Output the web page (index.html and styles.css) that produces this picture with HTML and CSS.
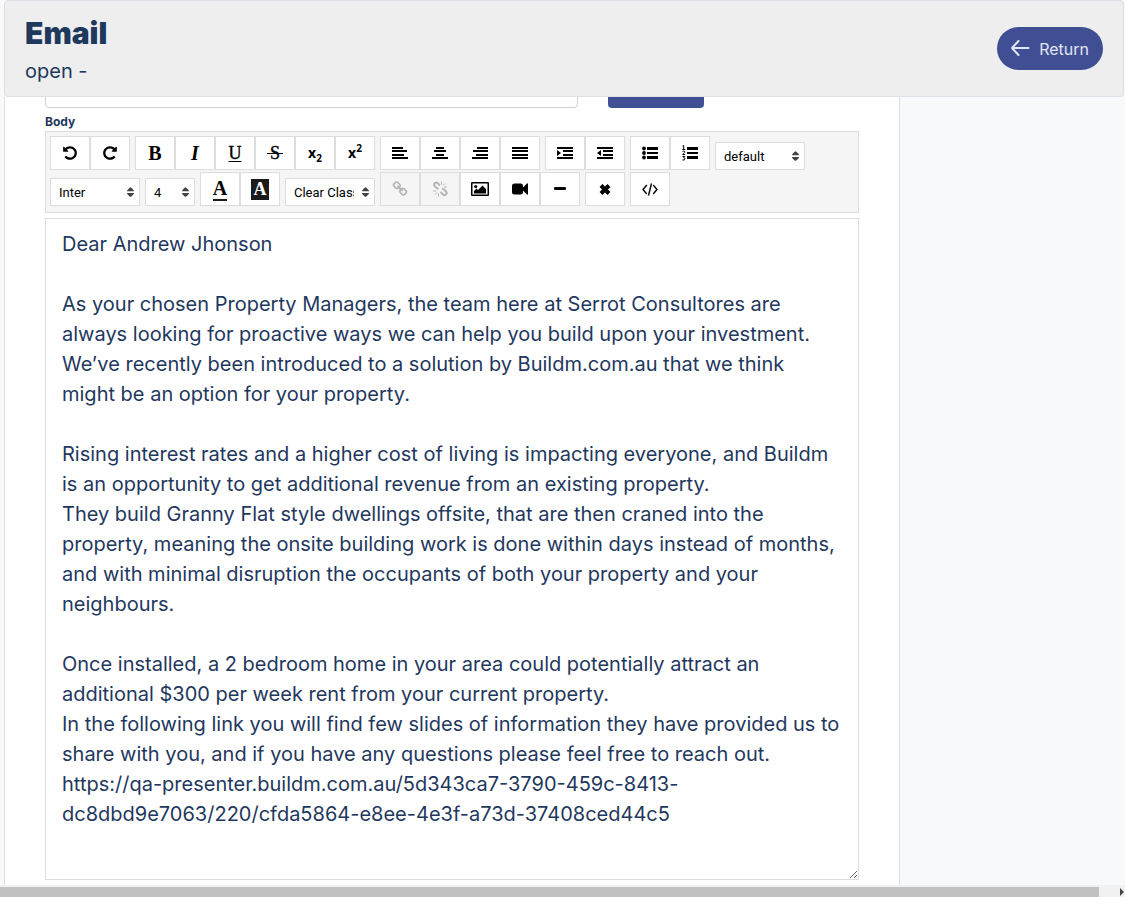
FILE: index.html
```html
<!DOCTYPE html>
<html lang="en">
<head>
<meta charset="utf-8">
<meta name="viewport" content="width=device-width, initial-scale=1">
<title>Email</title>
<link rel="stylesheet" href="styles.css">
</head>
<body>
<div class="page">
  <header class="header">
    <div class="heading">
      <h1 class="title">Email</h1>
      <p class="subtitle">open -</p>
    </div>
    <button class="return" type="button">
      <svg class="return-icon" viewBox="0 0 20 20" aria-hidden="true"><path d="M18.500 9H2M8.500 2L2 9l6.500 7"/></svg>
      Return
    </button>
  </header>

  <main class="main">
    <form class="card">
      <div class="subject-row">
        <input class="subject" type="text" aria-label="Subject">
        <button class="apply" type="button" aria-label="Apply"></button>
      </div>
      <label class="label" for="body">Body</label>

      <div class="toolbar" role="toolbar" aria-label="Formatting">
        <div class="group">
          <button class="tool" type="button" aria-label="Undo"><svg class="icon" viewBox="0 0 1792 1792"><path d="M1664 896q0 156-61 298t-164 245-245 164-298 61q-172 0-327-72.500t-264-204.500q-7-10-6.500-22.500t8.500-20.500l137-138q10-9 25-9 16 2 23 12 73 95 179 147t225 52q104 0 198.500-40.500t163.500-109.500 109.500-163.500 40.500-198.500-40.500-198.500-109.500-163.500-163.500-109.500-198.500-40.500q-98 0-188 35.500t-160 101.500l137 138q31 30 14 69-17 40-59 40h-448q-26 0-45-19t-19-45v-448q0-42 40-59 39-17 69 14l130 129q107-101 244.500-156.500t284.500-55.500q156 0 298 61t245 164 164 245 61 298z"/></svg></button>
          <button class="tool" type="button" aria-label="Redo"><svg class="icon icon-mirror" viewBox="0 0 1792 1792"><path d="M1664 896q0 156-61 298t-164 245-245 164-298 61q-172 0-327-72.500t-264-204.500q-7-10-6.500-22.500t8.500-20.500l137-138q10-9 25-9 16 2 23 12 73 95 179 147t225 52q104 0 198.500-40.500t163.500-109.500 109.500-163.500 40.500-198.500-40.500-198.500-109.500-163.500-163.500-109.500-198.500-40.500q-98 0-188 35.500t-160 101.500l137 138q31 30 14 69-17 40-59 40h-448q-26 0-45-19t-19-45v-448q0-42 40-59 39-17 69 14l130 129q107-101 244.500-156.500t284.500-55.500q156 0 298 61t245 164 164 245 61 298z"/></svg></button>
        </div>
        <div class="group">
          <button class="tool serif" type="button" aria-label="Bold">B</button>
          <button class="tool serif" type="button" aria-label="Italic"><i>I</i></button>
          <button class="tool serif regular" type="button" aria-label="Underline"><u>U</u></button>
          <button class="tool serif regular" type="button" aria-label="Strikethrough"><span class="strike">S</span></button>
          <button class="tool script" type="button" aria-label="Subscript"><span>x<sub>2</sub></span></button>
          <button class="tool script" type="button" aria-label="Superscript"><span>x<sup>2</sup></span></button>
        </div>
        <div class="group">
          <button class="tool" type="button" aria-label="Align left"><svg class="icon" viewBox="0 0 16 16"><path d="M0 2h11v2H0zM0 5h15v2H0zM0 9h12v2H0zM0 12h16v2H0z"/></svg></button>
          <button class="tool" type="button" aria-label="Align center"><svg class="icon" viewBox="0 0 16 16"><path d="M4 2h8v2H4zM2 5h12v2H2zM4 9h8v2H4zM0 12h16v2H0z"/></svg></button>
          <button class="tool" type="button" aria-label="Align right"><svg class="icon" viewBox="0 0 16 16"><path d="M5 2h11v2H5zM1 5h15v2H1zM4 9h12v2H4zM0 12h16v2H0z"/></svg></button>
          <button class="tool" type="button" aria-label="Justify"><svg class="icon" viewBox="0 0 16 16"><path d="M0 2h16v2H0zM0 5h16v2H0zM0 9h16v2H0zM0 12h16v2H0z"/></svg></button>
        </div>
        <div class="group">
          <button class="tool" type="button" aria-label="Indent"><svg class="icon" viewBox="0 0 16 16"><path d="M0 2h16v2H0zM6 5h10v2H6zM6 9h10v2H6zM0 12h16v2H0zM0 5l4 3-4 3z"/></svg></button>
          <button class="tool" type="button" aria-label="Outdent"><svg class="icon" viewBox="0 0 16 16"><path d="M0 2h16v2H0zM6 5h10v2H6zM6 9h10v2H6zM0 12h16v2H0zM4 5l-4 3 4 3z"/></svg></button>
        </div>
        <div class="group">
          <button class="tool" type="button" aria-label="Bulleted list"><svg class="icon" viewBox="0 0 16 16"><path d="M5 2h11v3H5zM5 7h11v2H5zM5 11h11v3H5z"/><circle cx="2" cy="3.500" r="1.900"/><circle cx="2" cy="8" r="1.900"/><circle cx="2" cy="12.500" r="1.900"/></svg></button>
          <button class="tool" type="button" aria-label="Numbered list"><svg class="icon" viewBox="0 0 16 16"><path d="M5 2h11v3H5zM5 7h11v2H5zM5 11h11v3H5z"/><path class="line" d="M.500 1L1.700.500v4M.300 4.500h2.900M.500 6.500q1-.700 2-.200 1 1-.600 2L.600 9.500h2.600M.500 11.500h2.300l-1.200 1.300q1.600 0 1.400 1.400-.600 1.400-2.600.700"/></svg></button>
        </div>
        <span class="picker picker-wide">
          <select class="select" aria-label="Block style"><option>default</option></select>
          <svg class="sorter" viewBox="0 0 8 12"><path d="M0 5q0-1 1-2l2-2q1-1 2 0l2 2q1 1 1 2zM0 7h8q0 1-1 2l-2 2q-1 1-2 0L1 9Q0 8 0 7z"/></svg>
        </span>
        <span class="picker picker-wide">
          <select class="select" aria-label="Font"><option>Inter</option></select>
          <svg class="sorter" viewBox="0 0 8 12"><path d="M0 5q0-1 1-2l2-2q1-1 2 0l2 2q1 1 1 2zM0 7h8q0 1-1 2l-2 2q-1 1-2 0L1 9Q0 8 0 7z"/></svg>
        </span>
        <span class="picker picker-narrow">
          <select class="select" aria-label="Font size"><option>4</option></select>
          <svg class="sorter" viewBox="0 0 8 12"><path d="M0 5q0-1 1-2l2-2q1-1 2 0l2 2q1 1 1 2zM0 7h8q0 1-1 2l-2 2q-1 1-2 0L1 9Q0 8 0 7z"/></svg>
        </span>
        <div class="group">
          <button class="tool serif" type="button" aria-label="Text color"><span class="ink">A</span></button>
          <button class="tool serif" type="button" aria-label="Background color"><span class="fill">A</span></button>
        </div>
        <span class="picker picker-wide">
          <select class="select" aria-label="Class"><option>Clear Class</option></select>
          <svg class="sorter" viewBox="0 0 8 12"><path d="M0 5q0-1 1-2l2-2q1-1 2 0l2 2q1 1 1 2zM0 7h8q0 1-1 2l-2 2q-1 1-2 0L1 9Q0 8 0 7z"/></svg>
        </span>
        <div class="group">
          <button class="tool" type="button" aria-label="Insert link" disabled><svg class="icon" viewBox="0 0 1792 1792"><path d="M1520 1216q0-40-28-68l-208-208q-28-28-68-28-42 0-72 32 3 3 19 18.500t21.500 21.500 15 19 13 25.500 3.500 27.500q0 40-28 68t-68 28q-15 0-27.500-3.500t-25.500-13-19-15-21.500-21.500-18.500-19q-33 31-33 73 0 40 28 68l206 207q27 27 68 27 40 0 68-26l147-146q28-28 28-67zm-703-705q0-40-28-68l-206-207q-28-28-68-28-39 0-68 27l-147 146q-28 28-28 67 0 40 28 68l208 208q27 27 68 27 42 0 72-31-3-3-19-18.500t-21.500-21.500-15-19-13-25.500-3.500-27.500q0-40 28-68t68-28q15 0 27.500 3.500t25.500 13 19 15 21.500 21.500 18.500 19q33-31 33-73zm895 705q0 120-85 203l-147 146q-83 83-203 83-121 0-204-85l-206-207q-83-83-83-203 0-123 88-209l-88-88q-86 88-208 88-120 0-204-84l-208-208q-84-84-84-204t85-203l147-146q83-83 203-83 121 0 204 85l206 207q83 83 83 203 0 123-88 209l88 88q86-88 208-88 120 0 204 84l208 208q84 84 84 204z"/></svg></button>
          <button class="tool" type="button" aria-label="Unlink" disabled><svg class="icon" viewBox="0 0 16 16"><path class="chain" d="M6.500 7.500q-1 .300-1.800-.500L2.400 4.700Q1.500 3.600 2.500 2.500L3.300 1.800Q4.500 1 5.500 2L8 4.500M8.500 11l2.800 2.800q1.100.900 2.200 0l.700-.800q1-1.100 0-2.200L12 8.500q-.900-.800-2-.300"/><path class="line" d="M9.500.500v3M11 4.500L13 2.500M12 6h3M1 10h3M3 13.500l2-2M6.500 12.500v3"/></svg></button>
          <button class="tool" type="button" aria-label="Insert image"><svg class="icon icon-wide" viewBox="0 0 18 16"><path fill-rule="evenodd" d="M1 1h16q1 0 1 1v12q0 1-1 1H1q-1 0-1-1V2q0-1 1-1zM1.500 2.500v11h15v-11z"/><circle cx="4.700" cy="5.500" r="1.600"/><path d="M3 12.500V10L5.500 7.500 7 9l4.500-4.500L15 8v4.500z"/></svg></button>
          <button class="tool" type="button" aria-label="Insert video"><svg class="icon" viewBox="0 0 16 16"><path d="M2.500 2.500h6q2.500 0 2.500 2.500v1.500l4-4q1-.500 1 .500v10q0 1-1 .500l-4-4V11q0 2.500-2.500 2.500h-6Q0 13.500 0 11V5q0-2.500 2.500-2.500z"/></svg></button>
          <button class="tool" type="button" aria-label="Horizontal line"><svg class="icon" viewBox="0 0 16 16"><rect x="2" y="6" width="12" height="3" rx="1"/></svg></button>
        </div>
        <div class="group">
          <button class="tool" type="button" aria-label="Clear formatting"><svg class="icon" viewBox="0 0 16 16"><path class="cross" d="M4 4.500l8 8M12 4.500l-8 8"/></svg></button>
        </div>
        <div class="group">
          <button class="tool" type="button" aria-label="HTML code"><svg class="icon" viewBox="0 0 16 16"><path class="code" d="M4.800 4L1 8.500l3.800 4.500M11.200 4L15 8.500l-3.800 4.500M9.500 2.500l-3 12"/></svg></button>
        </div>
      </div>

      <textarea class="editor" id="body" spellcheck="false">Dear Andrew Jhonson

As your chosen Property Managers, the team here at Serrot Consultores are always looking for proactive ways we can help you build upon your investment.
We’ve recently been introduced to a solution by Buildm.com.au that we think might be an option for your property.

Rising interest rates and a higher cost of living is impacting everyone, and Buildm is an opportunity to get additional revenue from an existing property.
They build Granny Flat style dwellings offsite, that are then craned into the property, meaning the onsite building work is done within days instead of months, and with minimal disruption the occupants of both your property and your neighbours.

Once installed, a 2 bedroom home in your area could potentially attract an additional $300 per week rent from your current property.
In the following link you will find few slides of information they have provided us to share with you, and if you have any questions please feel free to reach out.
https://qa-presenter.buildm.com.au/5d343ca7-3790-459c-8413-dc8dbd9e7063/220/cfda5864-e8ee-4e3f-a73d-37408ced44c5</textarea>
    </form>
  </main>

  <div class="scrollbar" aria-hidden="true">
    <div class="thumb"></div>
    <svg class="scroll-arrow" viewBox="0 0 6 8"><path d="M1 0l4 4-4 4z"/></svg>
  </div>
</div>
</body>
</html>
```

FILE: styles.css
```css
* {
  box-sizing: border-box;
}

body {
  margin: 0;
  background: #f8f9fb;
  color: #1f385e;
  font-family: Inter, "Liberation Sans", sans-serif;
}

.page {
  display: flex;
  flex-direction: column;
  height: 100vh;
  overflow: hidden;
}

.header {
  display: flex;
  flex: none;
  align-items: center;
  justify-content: space-between;
  margin: 0 1px 0 4px;
  padding: 11px 20px;
  border: 1px solid #dddfe6;
  border-radius: 4px;
  background: #eee;
}

.title {
  margin: 0 0 3px;
  font-size: 30px;
  font-weight: 900;
  line-height: 42px;
}

.subtitle {
  margin: 0;
  font-size: 20px;
  line-height: 28px;
}

.return {
  display: flex;
  align-items: center;
  gap: 9px;
  padding: 12px 14px 11px 13px;
  border: 0;
  border-radius: 22px;
  background: #404f94;
  color: #e1e5f5;
  font: 16px/20px Inter, sans-serif;
}

.return-icon {
  width: 20px;
  height: 20px;
  fill: none;
  stroke: currentColor;
  stroke-width: 2;
  stroke-linecap: round;
  stroke-linejoin: round;
}

.main {
  display: flex;
  flex: 1;
  min-height: 0;
  padding-left: 4px;
  overflow: hidden;
}

.card {
  display: flex;
  flex-direction: column;
  width: 79.9%;
  padding: 0 40px 5px;
  border: solid #dddfe6;
  border-width: 0 1px;
  background: #fff;
}

.subject-row {
  display: flex;
  gap: 30px;
  margin-top: -27px;
}

.subject {
  width: 65.5%;
  height: 38px;
  border: 1px solid #cdd1da;
  border-radius: 4px;
}

.apply {
  width: 96px;
  border: 0;
  border-radius: 4px;
  background: #404f94;
}

.label {
  margin: 5px 0 1px;
  font-size: 12px;
  font-weight: 700;
  line-height: 17px;
}

.toolbar {
  display: flex;
  flex-wrap: wrap;
  align-items: flex-end;
  gap: 2px 5px;
  padding: 4px 4px 6px;
  border: 1px solid #ddd;
  background: #f5f5f5;
  color: #000;
}

.group {
  display: flex;
}

.tool {
  display: flex;
  align-items: center;
  justify-content: center;
  width: 40px;
  height: 34px;
  padding: 0;
  border: 1px solid #ddd;
  background: #fff;
  color: #000;
}

.tool:disabled {
  background: #f5f5f5;
  color: #b5b5b5;
}

.icon {
  width: 16px;
  height: 16px;
  fill: currentColor;
}

.icon-wide {
  width: 18px;
}

.icon-mirror {
  transform: scaleX(-1);
}

.line,
.chain,
.cross,
.code {
  fill: none;
  stroke: currentColor;
}

.chain {
  stroke-width: 2;
}

.cross {
  stroke-width: 4;
}

.code {
  stroke-width: 1.4;
}

.serif {
  font: bold 20px/22px "Liberation Serif", serif;
}

.regular {
  font-size: 18px;
  font-weight: 400;
  -webkit-text-stroke: 0.4px #000;
}

.serif u {
  text-decoration-thickness: 1px;
  text-underline-offset: 2px;
}

.strike {
  padding: 0 3px;
  background: linear-gradient(#000, #000) center / 100% 1px no-repeat;
}

.script {
  font: bold 14px/20px "Open Sans", sans-serif;
}

.script sub,
.script sup {
  font-size: 10px;
  line-height: 0;
}

.ink {
  border-bottom: 2px solid #1b1b1b;
}

.fill {
  width: 18px;
  height: 21px;
  background: #1b1b1b;
  color: #fff;
  font-size: 18px;
  line-height: 21px;
}

.picker {
  position: relative;
  height: 28px;
}

.picker-wide {
  width: 90px;
}

.picker-narrow {
  width: 50px;
}

.select {
  width: 100%;
  height: 100%;
  padding: 0 20px 0 8px;
  border: 1px solid #ddd;
  border-radius: 0;
  background: #fff;
  color: #000;
  font: 13px Roboto, sans-serif;
  appearance: none;
}

.sorter {
  position: absolute;
  top: 8px;
  right: 6px;
  width: 7px;
  height: 12px;
  fill: #444;
  pointer-events: none;
}

.editor {
  flex: 1;
  width: 100%;
  margin-top: 5px;
  padding: 10px 18px 10px 16px;
  border: 1px solid #ddd;
  background: #fff;
  color: #1f385e;
  font: 20px/30px Inter, "Liberation Sans", sans-serif;
  resize: vertical;
}

.scrollbar {
  display: flex;
  flex: none;
  align-items: center;
  justify-content: space-between;
  height: 12px;
  padding: 2px 0 0;
  background: #f1f1f1;
}

.thumb {
  width: 97.7%;
  height: 10px;
  background: #c1c1c1;
}

.scroll-arrow {
  width: 6px;
  height: 8px;
  fill: #444;
}
```
